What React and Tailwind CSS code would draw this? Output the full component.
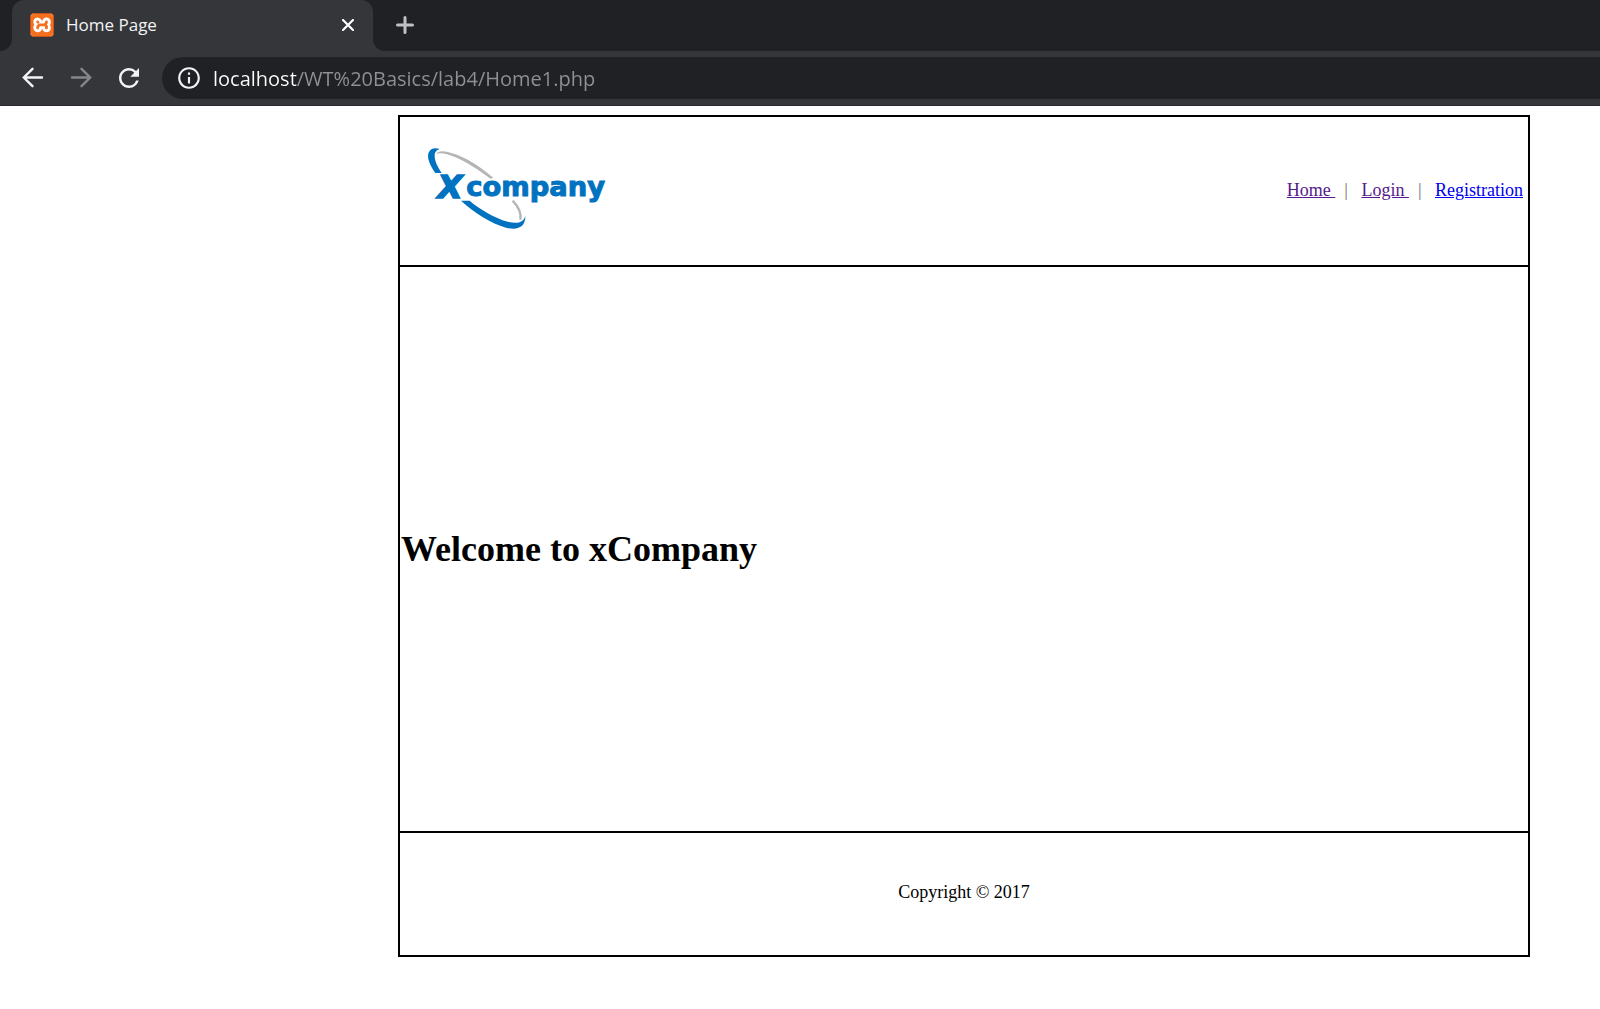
import React from "react";
import { SiXampp } from "react-icons/si";
import { MdRefresh, MdInfoOutline } from "react-icons/md";

function Arrow({ flip }) {
  return (
    <svg viewBox="0 0 24 24" className="size-6" fill="none" stroke="currentColor" strokeWidth="2.4" strokeLinecap="round" strokeLinejoin="miter">
      {flip ? <path d="M3 11.5H21M12.5 2.8L21.2 11.5L12.5 20.2" /> : <path d="M21 11.5H3M11.5 2.8L2.8 11.5L11.5 20.2" />}
    </svg>
  );
}

function TabFlare({ right }) {
  return (
    <svg viewBox="0 0 12 12" className="size-3 shrink-0 self-end text-[#35363a]" fill="currentColor" aria-hidden="true">
      {right ? <path d="M0 0A12 12 0 0 0 12 12H0Z" /> : <path d="M12 0A12 12 0 0 1 0 12H12Z" />}
    </svg>
  );
}

function TabStrip() {
  return (
    <div className="flex h-[51px] items-stretch bg-[#202124]">
      <TabFlare />
      <div className="flex w-[361px] items-center rounded-t-xl bg-[#35363a] pr-[15px] pb-[2px] pl-[18px]">
        <span className="flex size-6 items-center justify-center overflow-hidden rounded-sm border border-[#c9541a] bg-white text-[#f4701f]">
          <SiXampp className="size-6 shrink-0" />
        </span>
        <span className="ml-3 flex-1 text-[17px] text-[#f1f3f4]">Home Page</span>
        <button type="button" aria-label="Close tab" className="flex size-5 items-center justify-center text-white">
          <svg viewBox="0 0 12 12" className="size-3" stroke="currentColor" strokeWidth="2.2" strokeLinecap="round">
            <path d="M1 1L11 11M11 1L1 11" />
          </svg>
        </button>
      </div>
      <TabFlare right />
      <button type="button" aria-label="New tab" className="ml-[10px] flex w-5 items-center justify-center pb-[2px] text-[#bdc1c6]">
        <svg viewBox="0 0 18 18" className="size-[18px]" stroke="currentColor" strokeWidth="3" strokeLinecap="round">
          <path d="M9 1.5V16.5M1.5 9H16.5" />
        </svg>
      </button>
    </div>
  );
}

function Toolbar() {
  return (
    <div className="flex h-[55px] items-center border-b border-[#28292c] bg-[#35363a] pl-[21px] text-[#f1f3f4]">
      <button type="button" aria-label="Back" className="mr-6"><Arrow /></button>
      <button type="button" aria-label="Forward" className="mr-[21px] text-[#85868a]"><Arrow flip /></button>
      <button type="button" aria-label="Reload" className="mr-[18px]"><MdRefresh className="size-[30px]" /></button>
      <div className="flex h-[42px] flex-1 items-center rounded-l-full bg-[#202124] pl-[14px]">
        <MdInfoOutline className="size-[26px] shrink-0" />
        <input
          type="text"
          aria-label="Address"
          defaultValue="localhost/WT%20Basics/lab4/Home1.php"
          className="ml-[11px] h-8 min-w-0 flex-1 bg-[linear-gradient(90deg,#ffffff_84px,#8f9195_84px)] bg-clip-text text-xl text-transparent caret-white outline-none"
        />
      </div>
    </div>
  );
}

function Logo() {
  return (
    <svg viewBox="105 125 546 249" className="w-[182px]" role="img" aria-label="Xcompany">
      <path fill="#b5b5b5" d="M136 147C140 132 165 136 200 149C240 165 275 191 307 217L298 220C265 195 225 168 190 154C160 142 142 141 136 147Z" />
      <path fill="none" stroke="#b5b5b5" strokeWidth="7" d="M365 286C382 304 392 324 388 343" />
      <path fill="#0072c0" d="M146 131C118 122 105 143 114 168C119 183 126 194 133 203L152 203C140 185 131 167 131 152C131 140 137 134 146 131Z" />
      <path fill="#0072c0" d="M210 286C250 322 300 354 345 367C385 377 404 360 403 332C398 351 380 357 350 349C310 338 265 311 236 286Z" />
      <g fill="#0072c0" stroke="#0072c0" fontFamily="'DejaVu Sans'" fontWeight="bold">
        <text x="140" y="279" fontSize="96" strokeWidth="5" fontStyle="italic">X</text>
        <text x="226" y="273" fontSize="82" strokeWidth="3">company</text>
      </g>
    </svg>
  );
}

const visited = "text-[#551a8b] underline";

function Separator() {
  return <span className="text-[#6f6f78]">{"  |   "}</span>;
}

export default function App() {
  return (
    <div className="min-h-screen bg-white">
      <header className="font-['Open_Sans',sans-serif]">
        <TabStrip />
        <Toolbar />
      </header>
      <main className="pt-[9px] pr-[70px] pl-[398px] font-['Liberation_Serif',serif] text-lg text-black">
        <table className="w-full border-collapse border-2 border-black">
          <tbody>
            <tr className="h-[150px] border-b-2 border-black">
              <td className="pb-[6px] pl-[26px]"><Logo /></td>
              <td className="pr-[5px] pb-[2px] text-right">
                <nav className="whitespace-pre">
                  <a href="#home" className={visited}>{"Home "}</a>
                  <Separator />
                  <a href="#login" className={visited}>{"Login "}</a>
                  <Separator />
                  <a href="#registration" className="text-[#0000ee] underline">Registration</a>
                </nav>
              </td>
            </tr>
            <tr className="h-[566px] border-b-2 border-black">
              <td colSpan={2} className="px-px"><h1 className="text-4xl font-bold">Welcome to xCompany</h1></td>
            </tr>
            <tr className="h-[124px]">
              <td colSpan={2} className="pb-1 text-center">Copyright © 2017</td>
            </tr>
          </tbody>
        </table>
      </main>
    </div>
  );
}
